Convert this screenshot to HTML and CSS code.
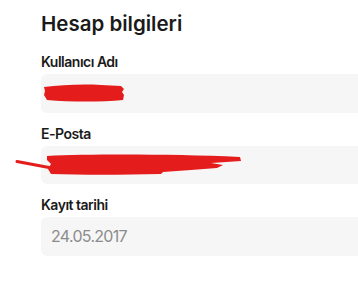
FILE: index.html
```html
<!DOCTYPE html>
<html lang="tr">
<head>
<meta charset="utf-8">
<link rel="stylesheet" href="styles.css">
</head>
<body>
<main class="page">
  <h1 class="title">Hesap bilgileri</h1>
  <div class="group">
    <div class="label">Kullanıcı Adı</div>
    <div class="field">
      <svg class="scribble s1" width="90" height="39" viewBox="0 0 90 39">
        <path d="M3 13 C20 11 40 10 60 11 L80 12 L83 15 L81 18 L83 21 L82 26 C60 28 30 28 6 26 L3 21 L4 17 Z" fill="#e51c1c"/>
      </svg>
    </div>
  </div>
  <div class="group">
    <div class="label">E-Posta</div>
    <div class="field">
      <svg class="scribble s2" width="260" height="39" viewBox="0 0 260 39">
        <path d="M6 15.5 L38 21.5" stroke="#e51c1c" stroke-width="3" fill="none" stroke-linecap="round"/>
        <path d="M36 10 C80 8 160 8 229 11 L230 15 L200 17 L212 19 L206 22 L180 24 L152 26 L150 28 C110 29 70 29 40 28 L37 23 L40 18 L36 14 Z" fill="#e51c1c"/>
      </svg>
    </div>
  </div>
  <div class="group">
    <div class="label">Kayıt tarihi</div>
    <div class="field"><span class="value">24.05.2017</span></div>
  </div>
</main>
</body>
</html>
```
FILE: styles.css
```css
html, body {
  margin: 0;
  padding: 0;
  background: #ffffff;
  overflow: hidden;
}
.page {
  padding: 12px 0 0 41px;
  font-family: Inter, "Noto Sans", sans-serif;
  color: #1a1a1a;
}
.title {
  margin: 0 0 17px 0;
  font-size: 20.5px;
  line-height: 24px;
  font-weight: 600;
}
.group {
  margin-bottom: 12px;
}
.label {
  font-size: 14px;
  line-height: 18px;
  font-weight: 600;
  letter-spacing: -0.5px;
  margin-bottom: 3px;
}
.field {
  position: relative;
  height: 38.5px;
  background: #f6f6f6;
  border-radius: 6px 0 0 6px;
  display: flex;
  align-items: center;
  padding-left: 10px;
}
.value {
  font-size: 16px;
  letter-spacing: -0.7px;
  color: #8c8c8c;
}
.scribble {
  position: absolute;
  top: 0;
  overflow: visible;
}
.s1 {
  left: 0;
}
.s2 {
  left: -30px;
}
```
